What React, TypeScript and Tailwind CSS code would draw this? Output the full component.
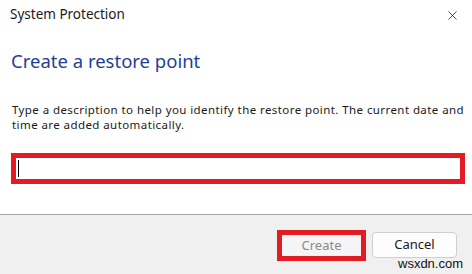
import { X } from 'lucide-react';

export default function App() {
    return (
        <div className="w-[472px] h-[274px] bg-white flex flex-col relative overflow-hidden">
            {/* 标题栏 */}
            <div className="h-[30px] flex items-center justify-between pl-[10px] pr-[12px]">
                <span className="text-[13.5px] text-[#1a1a1a] font-['Noto_Sans',sans-serif] leading-none">System Protection</span>
                <X size={15} strokeWidth={1.2} className="text-[#111]" />
            </div>

            <div className="flex-1 px-[11px]">
                <h1 className="mt-[22px] text-[18.5px] leading-none text-[#1f3f96] font-['Noto_Sans',sans-serif]">
                    Create a restore point
                </h1>
                <p className="mt-[31px] pl-[1px] w-[456px] text-[11.5px] tracking-[0.42px] leading-[15px] text-[#1a1a1a] font-['Noto_Sans',sans-serif]">
                    Type a description to help you identify the restore point. The current date and time are added automatically.
                </p>
                <div className="mt-[21px] h-[31px] w-[454px] border-[5px] border-[#e31b23] bg-white flex items-center pl-[2px]">
                    <div className="w-[1px] h-[17px] bg-black"></div>
                </div>
            </div>

            <div className="h-[60px] bg-[#f0f0f0] border-t border-[#a8a8a8] flex justify-end items-start pt-[15px] pr-[15px] gap-[6px]">
                <div className="w-[89px] h-[31px] border-[5px] border-[#e31b23] bg-[#f5f5f5] flex items-center justify-center">
                    <span className="text-[13px] text-[#8a8a8a] font-['Noto_Sans',sans-serif]">Create</span>
                </div>
                <div className="mt-[2px] w-[85px] h-[26px] rounded-[4px] border border-[#cfcfcf] bg-[#fdfdfd] flex items-center justify-center">
                    <span className="text-[13px] text-[#1a1a1a] font-['Noto_Sans',sans-serif]">Cancel</span>
                </div>
            </div>

            <span className="absolute left-[398px] top-[257px] text-[13px] leading-[14px] text-[#111] font-['Liberation_Sans',sans-serif]">wsxdn.com</span>
        </div>
    );
}
